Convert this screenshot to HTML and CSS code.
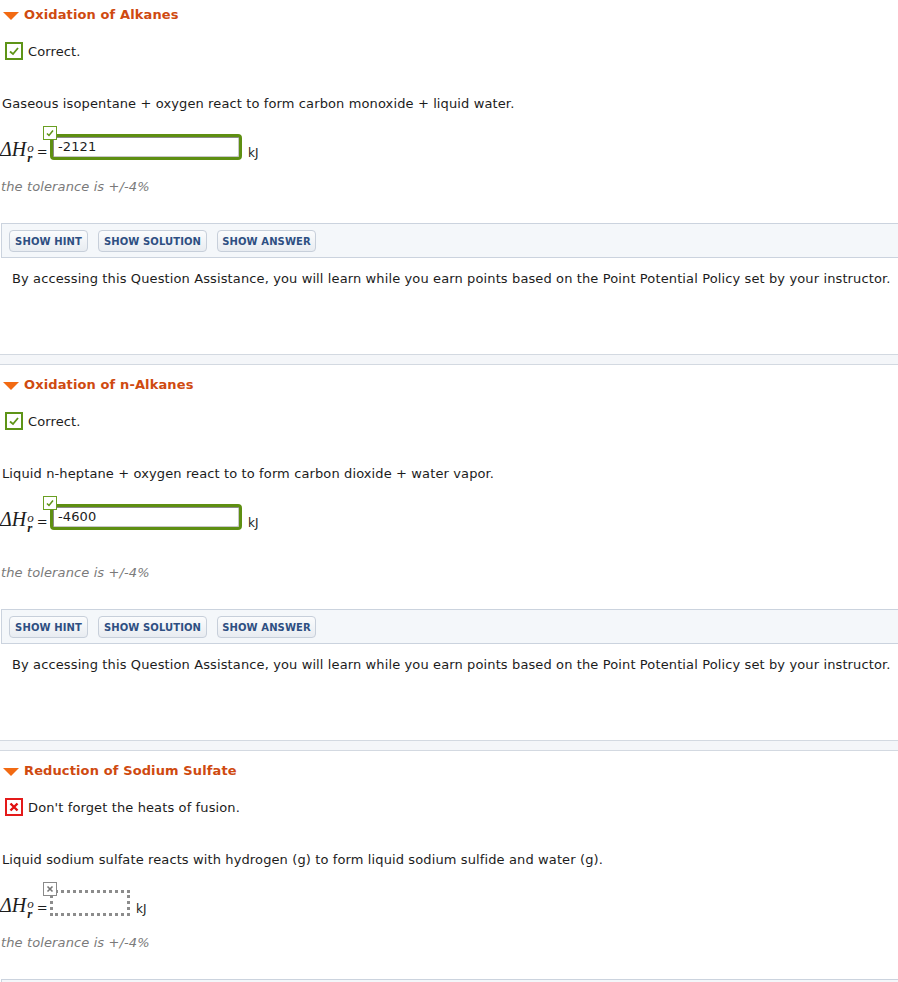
FILE: index.html
```html
<!DOCTYPE html>
<html lang="en">
<head>
<meta charset="utf-8">
<title>Question Assistance</title>
<link rel="stylesheet" href="styles.css">
</head>
<body>

<section class="question">
  <h2 class="q-title"><span class="caret"></span>Oxidation of Alkanes</h2>
  <div class="status">
    <span class="status-icon ok"><svg viewBox="0 0 14 14" width="14" height="14"><polyline points="3,7.5 6,10 11,4" fill="none" stroke="#5e9417" stroke-width="1.8"/></svg></span>
    <span>Correct.</span>
  </div>
  <p class="prompt">Gaseous isopentane + oxygen react to form carbon monoxide + liquid water.</p>
  <div class="eq">
    <span class="formula"><span class="dh">&Delta;H</span><span class="scripts"><span class="sup">o</span><span class="sub">r</span></span><span class="equals">=</span></span>
    <span class="field">
      <span class="badge ok"><svg viewBox="0 0 12 12" width="12" height="12"><polyline points="3,6.5 5,8.5 9,3.5" fill="none" stroke="#5e9417" stroke-width="1.5"/></svg></span>
      <input class="answer correct" type="text" value="-2121">
    </span>
    <span class="unit">kJ</span>
  </div>
  <p class="tolerance">the tolerance is +/-4%</p>
  <div class="assist">
    <button class="btn" style="width:79px">SHOW HINT</button>
    <button class="btn" style="width:109px">SHOW SOLUTION</button>
    <button class="btn" style="width:99px">SHOW ANSWER</button>
  </div>
  <p class="assist-note">By accessing this Question Assistance, you will learn while you earn points based on the Point Potential Policy set by your instructor.</p>
</section>
<div class="divider"></div>

<section class="question">
  <h2 class="q-title"><span class="caret"></span>Oxidation of n-Alkanes</h2>
  <div class="status">
    <span class="status-icon ok"><svg viewBox="0 0 14 14" width="14" height="14"><polyline points="3,7.5 6,10 11,4" fill="none" stroke="#5e9417" stroke-width="1.8"/></svg></span>
    <span>Correct.</span>
  </div>
  <p class="prompt">Liquid n-heptane + oxygen react to to form carbon dioxide + water vapor.</p>
  <div class="eq">
    <span class="formula"><span class="dh">&Delta;H</span><span class="scripts"><span class="sup">o</span><span class="sub">r</span></span><span class="equals">=</span></span>
    <span class="field">
      <span class="badge ok"><svg viewBox="0 0 12 12" width="12" height="12"><polyline points="3,6.5 5,8.5 9,3.5" fill="none" stroke="#5e9417" stroke-width="1.5"/></svg></span>
      <input class="answer correct" type="text" value="-4600">
    </span>
    <span class="unit">kJ</span>
  </div>
  <p class="tolerance spaced">the tolerance is +/-4%</p>
  <div class="assist">
    <button class="btn" style="width:79px">SHOW HINT</button>
    <button class="btn" style="width:109px">SHOW SOLUTION</button>
    <button class="btn" style="width:99px">SHOW ANSWER</button>
  </div>
  <p class="assist-note">By accessing this Question Assistance, you will learn while you earn points based on the Point Potential Policy set by your instructor.</p>
</section>
<div class="divider"></div>

<section class="question">
  <h2 class="q-title"><span class="caret"></span>Reduction of Sodium Sulfate</h2>
  <div class="status">
    <span class="status-icon bad"><svg viewBox="0 0 14 14" width="14" height="14"><path d="M3.5,3.5 L10.5,10.5 M10.5,3.5 L3.5,10.5" stroke="#e01010" stroke-width="2.4"/></svg></span>
    <span>Don't forget the heats of fusion.</span>
  </div>
  <p class="prompt">Liquid sodium sulfate reacts with hydrogen (g) to form liquid sodium sulfide and water (g).</p>
  <div class="eq">
    <span class="formula"><span class="dh">&Delta;H</span><span class="scripts"><span class="sup">o</span><span class="sub">r</span></span><span class="equals">=</span></span>
    <span class="field">
      <span class="badge none"><svg viewBox="0 0 12 12" width="12" height="12"><path d="M3.5,3.5 L8.5,8.5 M8.5,3.5 L3.5,8.5" stroke="#777" stroke-width="1.6"/></svg></span>
      <input class="answer empty" type="text" value="">
    </span>
    <span class="unit">kJ</span>
  </div>
  <p class="tolerance">the tolerance is +/-4%</p>
  <div class="assist">
    <button class="btn" style="width:79px">SHOW HINT</button>
    <button class="btn" style="width:109px">SHOW SOLUTION</button>
    <button class="btn" style="width:99px">SHOW ANSWER</button>
  </div>
</section>

</body>
</html>
```

FILE: styles.css
```css
html, body {
  margin: 0;
  padding: 0;
  background: #ffffff;
}
body {
  font-family: "DejaVu Sans", Verdana, sans-serif;
  font-size: 13px;
  letter-spacing: 0.12px;
  color: #1c1c1c;
  padding-top: 4px;
  overflow: hidden;
}
p { margin: 0; }

.q-title {
  margin: 0;
  height: 22px;
  line-height: 22px;
  font-size: 13px;
  font-weight: bold;
  color: #cf4a10;
  display: flex;
  align-items: center;
}
.caret {
  width: 0;
  height: 0;
  margin: 1px 5px 0 3px;
  border-left: 8px solid transparent;
  border-right: 8px solid transparent;
  border-top: 8px solid #f26a12;
}

.status {
  margin-top: 16px;
  height: 18px;
  display: flex;
  align-items: center;
  gap: 5px;
  padding-left: 5px;
  line-height: 20px;
}
.status span:last-child { padding-top: 1px; }
.status-icon {
  width: 14px;
  height: 14px;
  display: flex;
  align-items: center;
  justify-content: center;
  background: #fff;
}
.status-icon.ok { border: 2px solid #5e9417; }
.status-icon.bad { border: 2px solid #e41a1a; }

.prompt {
  margin-top: 35px;
  line-height: 18px;
  padding-left: 2px;
}

.eq {
  margin-top: 21px;
  display: flex;
  align-items: flex-end;
}
.formula {
  width: 50px;
  display: flex;
  align-items: flex-end;
  letter-spacing: 0;
}
.dh {
  font-family: "Liberation Serif", "Times New Roman", serif;
  font-style: italic;
  font-size: 20px;
  line-height: 20px;
  margin-bottom: 1px;
}
.scripts {
  display: flex;
  flex-direction: column;
  font-family: "Liberation Serif", "Times New Roman", serif;
  font-style: italic;
  font-size: 13px;
  line-height: 10px;
  margin-left: 1px;
  margin-bottom: -3px;
}
.sub { font-weight: bold; }
.equals {
  font-size: 13px;
  line-height: 16px;
  margin-left: 3px;
}

.field {
  position: relative;
  display: block;
}
.badge {
  position: absolute;
  left: -7px;
  top: -8px;
  width: 12px;
  height: 12px;
  background: #fff;
  display: flex;
  align-items: center;
  justify-content: center;
  z-index: 2;
}
.badge.ok { border: 1px solid #6a9f22; }
.badge.none { border: 1px solid #8a8a8a; }

.answer {
  display: block;
  box-sizing: border-box;
  height: 26px;
  margin: 0;
  padding: 0 0 2px 5px;
  font-family: "DejaVu Sans", Verdana, sans-serif;
  font-size: 13px;
  letter-spacing: 0.12px;
  color: #1c1c1c;
  background: #fff;
  outline: none;
}
.answer.correct {
  width: 192px;
  border: 3px solid #5e8f12;
  border-radius: 4px;
  box-shadow: inset 1px 1px 0 #8a8a8a, inset -1px -1px 0 #c8c8c8;
}
.answer.empty {
  width: 80px;
  border: 3px dotted #8c8c8c;
  border-radius: 0;
}
.unit {
  margin-left: 6px;
  font-size: 12px;
  line-height: 14px;
}

.tolerance {
  margin-top: 18px;
  line-height: 18px;
  font-style: italic;
  color: #7a7a7a;
  padding-left: 1px;
}
.tolerance.spaced { margin-top: 34px; }

.assist {
  margin-top: 27px;
  margin-left: 1px;
  border: 1px solid #cbd3de;
  border-right: none;
  background: #f4f7fa;
  display: flex;
  align-items: flex-start;
  gap: 10px;
  padding: 6px 0 0 7px;
  box-sizing: border-box;
  height: 35px;
}
.btn {
  height: 22px;
  padding: 0;
  font-family: "DejaVu Sans", Verdana, sans-serif;
  font-size: 10px;
  font-weight: bold;
  letter-spacing: 0.1px;
  color: #2e4f82;
  background: linear-gradient(#fbfcfd, #e8ecf1);
  border: 1px solid #c7cfda;
  border-radius: 4px;
  cursor: pointer;
}

.assist-note {
  margin-top: 12px;
  padding-left: 12px;
  line-height: 18px;
  white-space: nowrap;
}

.divider {
  margin-top: 66px;
  margin-bottom: 9px;
  height: 9px;
  border-top: 1px solid #d3d9e1;
  border-bottom: 1px solid #d3d9e1;
  background: #f4f6f9;
}
```
